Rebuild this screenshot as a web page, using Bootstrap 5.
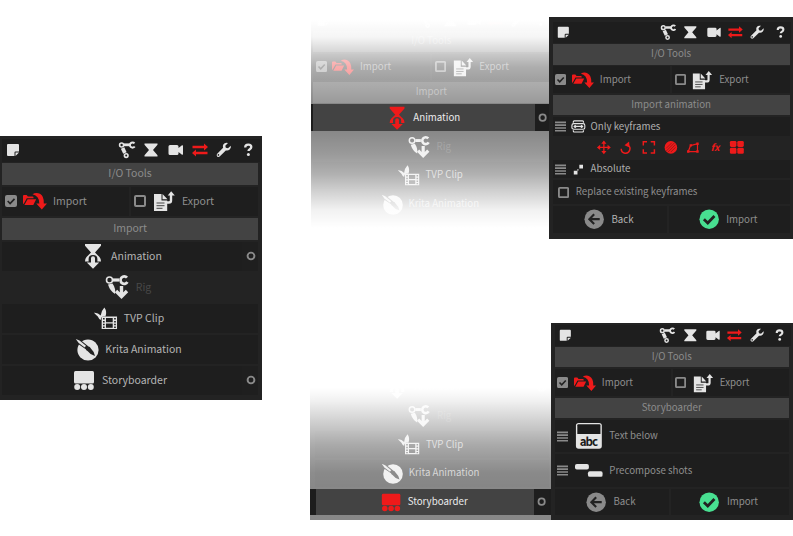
<!DOCTYPE html>
<html lang="en">
<head>
<meta charset="utf-8">
<meta name="viewport" content="width=device-width, initial-scale=1">
<title>I/O Tools</title>
<link href="https://cdn.jsdelivr.net/npm/bootstrap@5.3.0/dist/css/bootstrap.min.css" rel="stylesheet">
<style>
body{background:#fff;font-family:"Noto Sans CJK SC","Noto Sans",sans-serif;font-size:10.500px;line-height:1;width:793px;height:536px;overflow:hidden;color:#8f8f8f}
svg{display:block;flex:none;fill:currentColor}
.left-col{width:262px;padding-top:136px}
.right-col{margin-left:48px}
.top-set{height:323px}
.tool-panel{background:#232323;width:262px;padding:3px 4px 5px 2px;display:flex;flex-direction:column;gap:2px;flex:none}
.compact{zoom:.925}
.detail{width:264px;padding:5.5px 4px 0;height:240px;margin-top:18.4px}
.detail-sb{width:262px;padding:2px 5px 0 4px;height:213px}
.tool-head{height:23px;margin:0 -2px -1px 0;padding-left:2px;background:#1e1e1e;color:#e4e4e4}
.tool-head span{width:24.2px;display:flex;justify-content:center}
.tool-head svg{width:18px;height:18px;margin-top:-1px}
.title-bar{height:22px;background:#434343;color:#8c8c8c;padding-bottom:2px}
.cell{background:#1e1e1e;height:29px;gap:6px;padding-bottom:1px}
.compact .cell{padding-bottom:0}
.compact .title-bar{padding-bottom:1px}
.compact .tool-head svg{margin-top:0}
.opt{padding-left:3px;gap:6px}
.cell svg{color:#e4e4e4}
.choice{color:#b4b4b4}
.choice>.flex-fill{padding-right:1px}
.item-tvp .cell,.item-krita .cell{padding-right:3px}
.item-story .flex-fill{padding-right:5px}
.more{width:16px;background:#1f1f1f;padding-left:1px}
.rig-cell,.rig-cell .cell{background:#232323;color:#484848}
.rig-cell .cell{padding-right:5px}
.red,.cell svg.red{color:#ee1a1a}
.cell svg.grey{color:#8a8a8a}
.chosen{position:relative;z-index:2;background:#1d1d1d;margin:0 -4px 0 -2px;padding:0 4px 0 2px}
.chosen .cell{background:#434343;color:#ececec}
.chosen>.flex-fill{padding-right:2px}
.chosen .more{background:#1e1e1e}
.fader{position:relative;overflow:hidden;isolation:isolate}
.fader::after{content:"";position:absolute;inset:0;z-index:1}
.fade-a{margin:4px 0 0 1px;width:238px;height:228px}
.fade-a .tool-panel{margin-top:2.7px}
.fade-a::after{background:linear-gradient(#fff 16px,rgba(255,255,255,.95) 33px,rgba(255,255,255,.78) 48px,rgba(255,255,255,.64) 63px,rgba(255,255,255,.57) 78px,rgba(255,255,255,.46) 100px,rgba(255,255,255,.46) 127px,rgba(255,255,255,.54) 150px,rgba(255,255,255,.65) 170px,rgba(255,255,255,.8) 188px,rgba(255,255,255,.94) 206px,#fff 224px)}
.fade-b{width:241px;height:147px;margin-top:50px;display:flex;flex-direction:column;justify-content:flex-end}
.fade-b .tool-panel{padding-left:5px}
.fade-b .chosen{margin-left:-5px;padding-left:6px}
.fade-b::after{background:linear-gradient(#fff 15px,rgba(255,255,255,.94) 27px,rgba(255,255,255,.82) 44px,rgba(255,255,255,.62) 72px,rgba(255,255,255,.48) 100px,rgba(255,255,255,.46) 116px)}
.setting{height:20px;padding-left:3px;gap:5px;color:#b0b0b0}
.tool-strip{height:25px;margin:-2px 0 -1px;gap:7px;padding-left:47px}
.tall{height:35px;color:#8f8f8f;gap:7px}
.replace-row{height:26px;padding-left:6px;gap:7px}
.cell.gap-btn{gap:8px;padding-right:3px}
.pair{gap:2px}
.back-btn{width:124px}
.fx-icon{width:17px}
</style>
<script src="https://cdn.jsdelivr.net/npm/bootstrap@5.3.0/dist/js/bootstrap.bundle.min.js"></script>
</head>
<body>
<svg class="d-none">
<symbol id="note" viewBox="0 0 18 18"><path d="M4 3h10a1 1 0 0 1 1 1v6.500h-3.500a1 1 0 0 0-1 1V15H4a1 1 0 0 1-1-1V4a1 1 0 0 1 1-1zM11.500 11.500H15L11.500 15z"/></symbol>
<symbol id="bones" viewBox="0 0 18 18"><g fill="none" stroke="currentColor"><circle cx="3.600" cy="4" r="2" stroke-width="1.600"/><circle cx="8.200" cy="14.600" r="1.800" stroke-width="1.600"/><path d="M4.600 7l2.300 5" stroke-width="3.800"/><path d="M6 3.800h6" stroke-width="2.800"/><path d="M16.500 2.300a2.600 2.600 0 1 0 .2 3.200" stroke-width="2"/></g></symbol>
<symbol id="hour" viewBox="0 0 18 18"><path d="M2.500 2.500h13v1.300L11 9l4.500 5.200v1.300h-13v-1.300L7 9 2.500 3.800z"/></symbol>
<symbol id="cam" viewBox="0 0 18 18"><path d="M4 4h7a1.500 1.500 0 0 1 1.500 1.500V7L16 4.300q1-.5 1 .6v8.200q0 1.100-1 .6L12.500 11v1.500A1.500 1.500 0 0 1 11 14H4a1.500 1.500 0 0 1-1.500-1.500v-7A1.500 1.500 0 0 1 4 4z"/></symbol>
<symbol id="swap" viewBox="0 0 18 18"><path d="M1.500 4.800H13V2.500l4 3.500-4 3.500V7.200H1.500zM16.500 10.800H5V8.600L1 12l4 3.500v-2.300h11.500z"/></symbol>
<symbol id="wrench" viewBox="0 0 18 18"><path d="M15.800 4.700L13 7.300l-2.200-.5-.5-2.100L13 2Q9.800 1.200 8.300 3.400 7.500 4.900 8.100 6.800L2 13q-.8 1.500.2 2.400 1.100 1 2.500.1l6.100-6.100q2.300.6 3.900-.9 1.600-1.700 1.100-3.800zM3.700 14.700a.8.800 0 1 1 .1-1.500.8.800 0 0 1-.1 1.500z" fill-rule="evenodd"/></symbol>
<symbol id="help" viewBox="0 0 18 18"><path d="M6.200 6.400q0-2.700 3-2.700 3.100 0 3.100 2.400 0 1.200-1.500 2.100-1.300.8-1.300 1.900" fill="none" stroke="currentColor" stroke-width="2.300"/><circle cx="9.400" cy="13.500" r="1.500"/></symbol>
<symbol id="checked" viewBox="0 0 12 12"><rect width="12" height="12" rx="2"/><path d="M2.700 6l2.400 2.500 4.400-4.700" fill="none" stroke="#222" stroke-width="1.700"/></symbol>
<symbol id="unchecked" viewBox="0 0 12 12"><rect x="1" y="1" width="10" height="10" rx="1" fill="none" stroke="currentColor" stroke-width="2"/></symbol>
<symbol id="folder" viewBox="0 0 24 24"><path d="M0 7q0-1 1-1h2.600l1.300 1.500H9.500q1 0 1 1V9.300H3.800L.6 15Q0 15 0 14zM4.600 10.300h8.600L10.300 16H1.400z"/><path d="M9.500 5.200Q13 2.800 17 4.800q4.200 2.500 3.800 9.700H24L18.800 20.500 13.300 14.500h3Q16.500 7 9.500 5.200z"/></symbol>
<symbol id="export" viewBox="0 0 24 24"><path d="M2 5h7.500v6.500h5.700V22H2zM10.500 5l5 5.300h-5z"/><path d="M4.500 14h8M4.500 16.700h8M4.500 19.300h6" stroke="#444" stroke-width="1"/><path d="M15 13.500h2q2 0 2-2V5" fill="none" stroke="currentColor" stroke-width="2.400"/><path d="M15.700 6.500L19.200 2.200l3.600 4.300z"/></symbol>
<symbol id="anim" viewBox="0 0 24 28"><path d="M4 2h16v1.800L14 10.500l4.500 4.500q1.500 1.500 1.500 4.500h-3.600V17q0-4-4.400-4t-4.400 4v2.500H4q0-3 1.500-4.500l4.500-4.500L4 3.800z"/><path d="M12 14.200q2 0 2 2v4.300h4.200L12 26.800l-6.200-6.300H10v-4.300q0-2 2-2z"/></symbol>
<symbol id="rig" viewBox="0 0 26 26"><g fill="none" stroke="currentColor"><circle cx="5.500" cy="6" r="3" stroke-width="1.600"/><path d="M9 6h6" stroke-width="3.200"/><path d="M23 3.700a3.700 3.700 0 1 0 .4 4.300" stroke-width="2.800"/><path d="M17.500 12v10M12 17l5.500 5.500L23 17" stroke-width="3.400"/></g><path d="M4 10.500l4.500-1q3.500 5 2.500 10.500-5-3-7-9.500z"/></symbol>
<symbol id="tvp" viewBox="0 0 26 26"><path d="M1 7q4-.5 7 3 .5-5 3.800-8.500 3 4 1.200 9.500H10q-2 1-2 3.500-2-1-3-3.500-2-2-4-4z"/><path d="M9 11h16v13H9zM13.500 12.500v4.400h7v-4.400zM13.500 18.300v4.200h7v-4.200zM10.400 12.500h1.700v1.600h-1.700zM10.400 15.500h1.700v1.600h-1.700zM10.400 18.500h1.700v1.600h-1.700zM10.400 21.300h1.700v1.500h-1.700zM22 12.500h1.700v1.600H22zM22 15.500h1.700v1.600H22zM22 18.500h1.700v1.600H22zM22 21.300h1.700v1.500H22z" fill-rule="evenodd"/></symbol>
<symbol id="krita" viewBox="0 0 24 24"><circle cx="13" cy="13" r="10.600"/><path d="M2.500 6.500L5.500 3l8 6.400q1.600.3 2 1.600 3.500 3.300 4.500 8-4.800-1.300-7.500-5-1.500-.5-1.700-1.700z" fill="#222"/><path d="M.8 2l3.700 1.400 6.500 5.400-1.300 1.700-6-4.600z"/></symbol>
<symbol id="story" viewBox="0 0 24 24"><rect x="2" y="3" width="20" height="12.500" rx="1.500"/><circle cx="5.200" cy="19" r="3"/><circle cx="12" cy="19" r="3"/><circle cx="18.800" cy="19" r="3"/></symbol>
<symbol id="ring" viewBox="0 0 10 10"><circle cx="5" cy="5" r="3.400" fill="none" stroke="currentColor" stroke-width="1.900"/></symbol>
<symbol id="lines" viewBox="0 0 12 12"><path d="M0 1.500h12M0 4.500h12M0 7.500h12M0 10.500h12" stroke="currentColor" stroke-width="1.700"/></symbol>
<symbol id="keys" viewBox="0 0 16 14"><g fill="none" stroke="currentColor" stroke-width="1.300"><path d="M2.500 3V2q0-1 1-1h9q1 0 1 1v1M2.500 11v1q0 1 1 1h9q1 0 1-1v-1"/><rect x="1" y="4" width="14" height="6" rx="2"/></g><path d="M2.500 7l2-1.900L6.500 7l-2 1.900zM9.500 7l2-1.900L13.500 7l-2 1.900zM5 6.300h6v1.400H5z"/></symbol>
<symbol id="move" viewBox="0 0 16 16"><path d="M8 2v12M2 8h12" stroke="currentColor" stroke-width="1.400"/><path d="M8 .5L10.800 4H5.200zM8 15.500L10.800 12H5.200zM.5 8L4 5.200v5.600zM15.500 8L12 5.200v5.600z"/></symbol>
<symbol id="turn" viewBox="0 0 16 16"><path d="M3 9.500a4.700 4.700 0 1 0 7-4" fill="none" stroke="currentColor" stroke-width="1.600"/><path d="M6.500 5.800L11.500 1.500 12 8z"/></symbol>
<symbol id="frame" viewBox="0 0 16 16"><path d="M2 6V2h4M10 2h4v4M14 10v4h-4M6 14H2v-4" fill="none" stroke="currentColor" stroke-width="1.600"/></symbol>
<symbol id="disc" viewBox="0 0 16 16"><circle cx="8" cy="8" r="6.800"/><path d="M3 9l6-6M3 12l9-9M5 13l8-8M8 13l5-5" stroke="#8a1717" stroke-width=".8"/></symbol>
<symbol id="shape" viewBox="0 0 16 16"><path d="M3 12.500L5.500 6 13 4v8.500z" fill="none" stroke="currentColor" stroke-width="1.300"/><path d="M1.700 11.200h2.600v2.600H1.700zM4.500 4.500h2.600v2.600H4.500zM11.700 2.700h2.600v2.600h-2.600zM11.700 11.200h2.600v2.600h-2.600z"/></symbol>
<symbol id="four" viewBox="0 0 16 16"><rect x=".5" y="1" width="7" height="6.500" rx="1.500"/><rect x="8.500" y="1" width="7" height="6.500" rx="1.500"/><rect x=".5" y="8.500" width="7" height="6.500" rx="1.500"/><rect x="8.500" y="8.500" width="7" height="6.500" rx="1.500"/></symbol>
<symbol id="absolute" viewBox="0 0 16 14"><path d="M3 8.500h4v4H3zM9 2h4v4H9zM6.500 7.500l1-1 1 1-1 1z"/></symbol>
<symbol id="back" viewBox="0 0 22 22"><circle cx="11" cy="11" r="10.500"/><path d="M17 11H7M11 5.800L5.800 11l5.200 5.200" fill="none" stroke="#222" stroke-width="2.300"/></symbol>
<symbol id="ok" viewBox="0 0 22 22"><circle cx="11" cy="11" r="10.500" fill="#48df91"/><path d="M5.300 11l4.200 4.200 7.200-7.700" fill="none" stroke="#222" stroke-width="3"/></symbol>
<symbol id="below" viewBox="0 0 30 30"><rect x="1" y="1" width="28" height="28" rx="3"/><path d="M2.500 3.500q0-1 1-1h23q1 0 1 1V13h-25z" fill="#1b1b1b"/><text x="15" y="25.500" text-anchor="middle" font-size="12.500" font-weight="700" textLength="20" fill="#1b1b1b">abc</text></symbol>
<symbol id="shots" viewBox="0 0 30 16"><rect x="0" y="1" width="15" height="6" rx="2"/><rect x="14" y="9" width="16" height="6" rx="2"/></symbol>
</svg>

<main class="d-flex align-items-start">
<section class="left-col">
<div class="tool-panel">
<div class="tool-head d-flex align-items-center"><svg><use href="#note"/></svg><div class="d-flex ms-auto"><span><svg><use href="#bones"/></svg></span><span><svg><use href="#hour"/></svg></span><span><svg><use href="#cam"/></svg></span><span class="red"><svg><use href="#swap"/></svg></span><span><svg><use href="#wrench"/></svg></span><span><svg><use href="#help"/></svg></span></div></div>
<div class="title-bar d-flex align-items-center justify-content-center">I/O Tools</div>
<div class="d-flex pair"><div class="cell opt d-flex align-items-center flex-fill w-50"><svg class="grey" width="12" height="12"><use href="#checked"/></svg><svg class="red" width="24" height="24"><use href="#folder"/></svg>Import</div><div class="cell opt d-flex align-items-center flex-fill w-50"><svg class="grey" width="12" height="12"><use href="#unchecked"/></svg><svg width="24" height="24"><use href="#export"/></svg>Export</div></div>
<div class="title-bar d-flex align-items-center justify-content-center">Import</div>
<div class="d-flex choice"><div class="cell d-flex align-items-center justify-content-center flex-fill"><svg width="24" height="28"><use href="#anim"/></svg>Animation</div><div class="cell more d-flex align-items-center justify-content-center"><svg class="grey" width="10" height="10"><use href="#ring"/></svg></div></div>
<div class="rig-cell"><div class="cell d-flex align-items-center justify-content-center"><svg width="26" height="26"><use href="#rig"/></svg>Rig</div></div>
<div class="choice item-tvp"><div class="cell d-flex align-items-center justify-content-center"><svg width="25" height="25"><use href="#tvp"/></svg>TVP Clip</div></div>
<div class="choice item-krita"><div class="cell d-flex align-items-center justify-content-center"><svg width="24" height="24"><use href="#krita"/></svg>Krita Animation</div></div>
<div class="d-flex choice item-story"><div class="cell d-flex align-items-center justify-content-center flex-fill"><svg width="24" height="24"><use href="#story"/></svg>Storyboarder</div><div class="cell more d-flex align-items-center justify-content-center"><svg class="grey" width="10" height="10"><use href="#ring"/></svg></div></div>
</div>
</section>

<section class="right-col">
<div class="top-set d-flex align-items-start">
<div class="fader fade-a">
<div class="tool-panel compact">
<div class="tool-head d-flex align-items-center"><svg><use href="#note"/></svg><div class="d-flex ms-auto"><span><svg><use href="#bones"/></svg></span><span><svg><use href="#hour"/></svg></span><span><svg><use href="#cam"/></svg></span><span class="red"><svg><use href="#swap"/></svg></span><span><svg><use href="#wrench"/></svg></span><span><svg><use href="#help"/></svg></span></div></div>
<div class="title-bar d-flex align-items-center justify-content-center">I/O Tools</div>
<div class="d-flex pair"><div class="cell opt d-flex align-items-center flex-fill w-50"><svg class="grey" width="12" height="12"><use href="#checked"/></svg><svg class="red" width="24" height="24"><use href="#folder"/></svg>Import</div><div class="cell opt d-flex align-items-center flex-fill w-50"><svg class="grey" width="12" height="12"><use href="#unchecked"/></svg><svg width="24" height="24"><use href="#export"/></svg>Export</div></div>
<div class="title-bar d-flex align-items-center justify-content-center">Import</div>
<div class="d-flex chosen"><div class="cell d-flex align-items-center justify-content-center flex-fill"><svg class="red" width="24" height="28"><use href="#anim"/></svg>Animation</div><div class="cell more d-flex align-items-center justify-content-center"><svg class="grey" width="10" height="10"><use href="#ring"/></svg></div></div>
<div class="rig-cell"><div class="cell d-flex align-items-center justify-content-center"><svg width="26" height="26"><use href="#rig"/></svg>Rig</div></div>
<div class="choice item-tvp"><div class="cell d-flex align-items-center justify-content-center"><svg width="25" height="25"><use href="#tvp"/></svg>TVP Clip</div></div>
<div class="choice item-krita"><div class="cell d-flex align-items-center justify-content-center"><svg width="24" height="24"><use href="#krita"/></svg>Krita Animation</div></div>
<div class="d-flex choice"><div class="cell flex-fill"></div><div class="cell more"></div></div>
</div>
</div>

<div class="tool-panel compact detail">
<div class="tool-head d-flex align-items-center"><svg><use href="#note"/></svg><div class="d-flex ms-auto"><span><svg><use href="#bones"/></svg></span><span><svg><use href="#hour"/></svg></span><span><svg><use href="#cam"/></svg></span><span class="red"><svg><use href="#swap"/></svg></span><span><svg><use href="#wrench"/></svg></span><span><svg><use href="#help"/></svg></span></div></div>
<div class="title-bar d-flex align-items-center justify-content-center">I/O Tools</div>
<div class="d-flex pair"><div class="cell opt d-flex align-items-center flex-fill w-50"><svg class="grey" width="12" height="12"><use href="#checked"/></svg><svg class="red" width="24" height="24"><use href="#folder"/></svg>Import</div><div class="cell opt d-flex align-items-center flex-fill w-50"><svg class="grey" width="12" height="12"><use href="#unchecked"/></svg><svg width="24" height="24"><use href="#export"/></svg>Export</div></div>
<div class="title-bar d-flex align-items-center justify-content-center">Import animation</div>
<div class="cell setting d-flex align-items-center"><svg class="grey" width="12" height="12"><use href="#lines"/></svg><svg width="16" height="14"><use href="#keys"/></svg>Only keyframes</div>
<div class="tool-strip red d-flex align-items-center"><svg width="17" height="16"><use href="#move"/></svg><svg width="17" height="16"><use href="#turn"/></svg><svg width="17" height="16"><use href="#frame"/></svg><svg width="17" height="16"><use href="#disc"/></svg><svg width="17" height="16"><use href="#shape"/></svg><b class="fx-icon fst-italic text-center">fx</b><svg width="17" height="16"><use href="#four"/></svg></div>
<div class="cell setting d-flex align-items-center"><svg class="grey" width="12" height="12"><use href="#lines"/></svg><svg width="16" height="14"><use href="#absolute"/></svg>Absolute</div>
<div class="cell replace-row d-flex align-items-center"><svg class="grey" width="12" height="12"><use href="#unchecked"/></svg>Replace existing keyframes</div>
<div class="d-flex pair"><div class="cell gap-btn back-btn choice d-flex align-items-center justify-content-center"><svg class="grey" width="22" height="22"><use href="#back"/></svg>Back</div><div class="cell gap-btn d-flex align-items-center justify-content-center flex-fill"><svg width="22" height="22"><use href="#ok"/></svg>Import</div></div>
</div>
</div>

<div class="d-flex align-items-start">
<div class="fader fade-b">
<div class="tool-panel compact">
<div class="d-flex choice"><div class="cell d-flex align-items-center justify-content-center flex-fill"><svg width="24" height="28"><use href="#anim"/></svg>Animation</div><div class="cell more d-flex align-items-center justify-content-center"><svg class="grey" width="10" height="10"><use href="#ring"/></svg></div></div>
<div class="rig-cell"><div class="cell d-flex align-items-center justify-content-center"><svg width="26" height="26"><use href="#rig"/></svg>Rig</div></div>
<div class="choice item-tvp"><div class="cell d-flex align-items-center justify-content-center"><svg width="25" height="25"><use href="#tvp"/></svg>TVP Clip</div></div>
<div class="choice item-krita"><div class="cell d-flex align-items-center justify-content-center"><svg width="24" height="24"><use href="#krita"/></svg>Krita Animation</div></div>
<div class="d-flex chosen"><div class="cell d-flex align-items-center justify-content-center flex-fill"><svg class="red" width="24" height="24"><use href="#story"/></svg>Storyboarder</div><div class="cell more d-flex align-items-center justify-content-center"><svg class="grey" width="10" height="10"><use href="#ring"/></svg></div></div>
</div>
</div>

<div class="tool-panel compact detail-sb">
<div class="tool-head d-flex align-items-center"><svg><use href="#note"/></svg><div class="d-flex ms-auto"><span><svg><use href="#bones"/></svg></span><span><svg><use href="#hour"/></svg></span><span><svg><use href="#cam"/></svg></span><span class="red"><svg><use href="#swap"/></svg></span><span><svg><use href="#wrench"/></svg></span><span><svg><use href="#help"/></svg></span></div></div>
<div class="title-bar d-flex align-items-center justify-content-center">I/O Tools</div>
<div class="d-flex pair"><div class="cell opt d-flex align-items-center flex-fill w-50"><svg class="grey" width="12" height="12"><use href="#checked"/></svg><svg class="red" width="24" height="24"><use href="#folder"/></svg>Import</div><div class="cell opt d-flex align-items-center flex-fill w-50"><svg class="grey" width="12" height="12"><use href="#unchecked"/></svg><svg width="24" height="24"><use href="#export"/></svg>Export</div></div>
<div class="title-bar d-flex align-items-center justify-content-center">Storyboarder</div>
<div class="cell setting tall d-flex align-items-center"><svg class="grey" width="12" height="12"><use href="#lines"/></svg><svg width="30" height="30"><use href="#below"/></svg>Text below</div>
<div class="cell setting tall d-flex align-items-center"><svg class="grey" width="12" height="12"><use href="#lines"/></svg><svg width="30" height="16"><use href="#shots"/></svg>Precompose shots</div>
<div class="d-flex pair"><div class="cell gap-btn back-btn d-flex align-items-center justify-content-center"><svg class="grey" width="22" height="22"><use href="#back"/></svg>Back</div><div class="cell gap-btn d-flex align-items-center justify-content-center flex-fill"><svg width="22" height="22"><use href="#ok"/></svg>Import</div></div>
</div>
</div>
</section>
</main>
</body>
</html>
